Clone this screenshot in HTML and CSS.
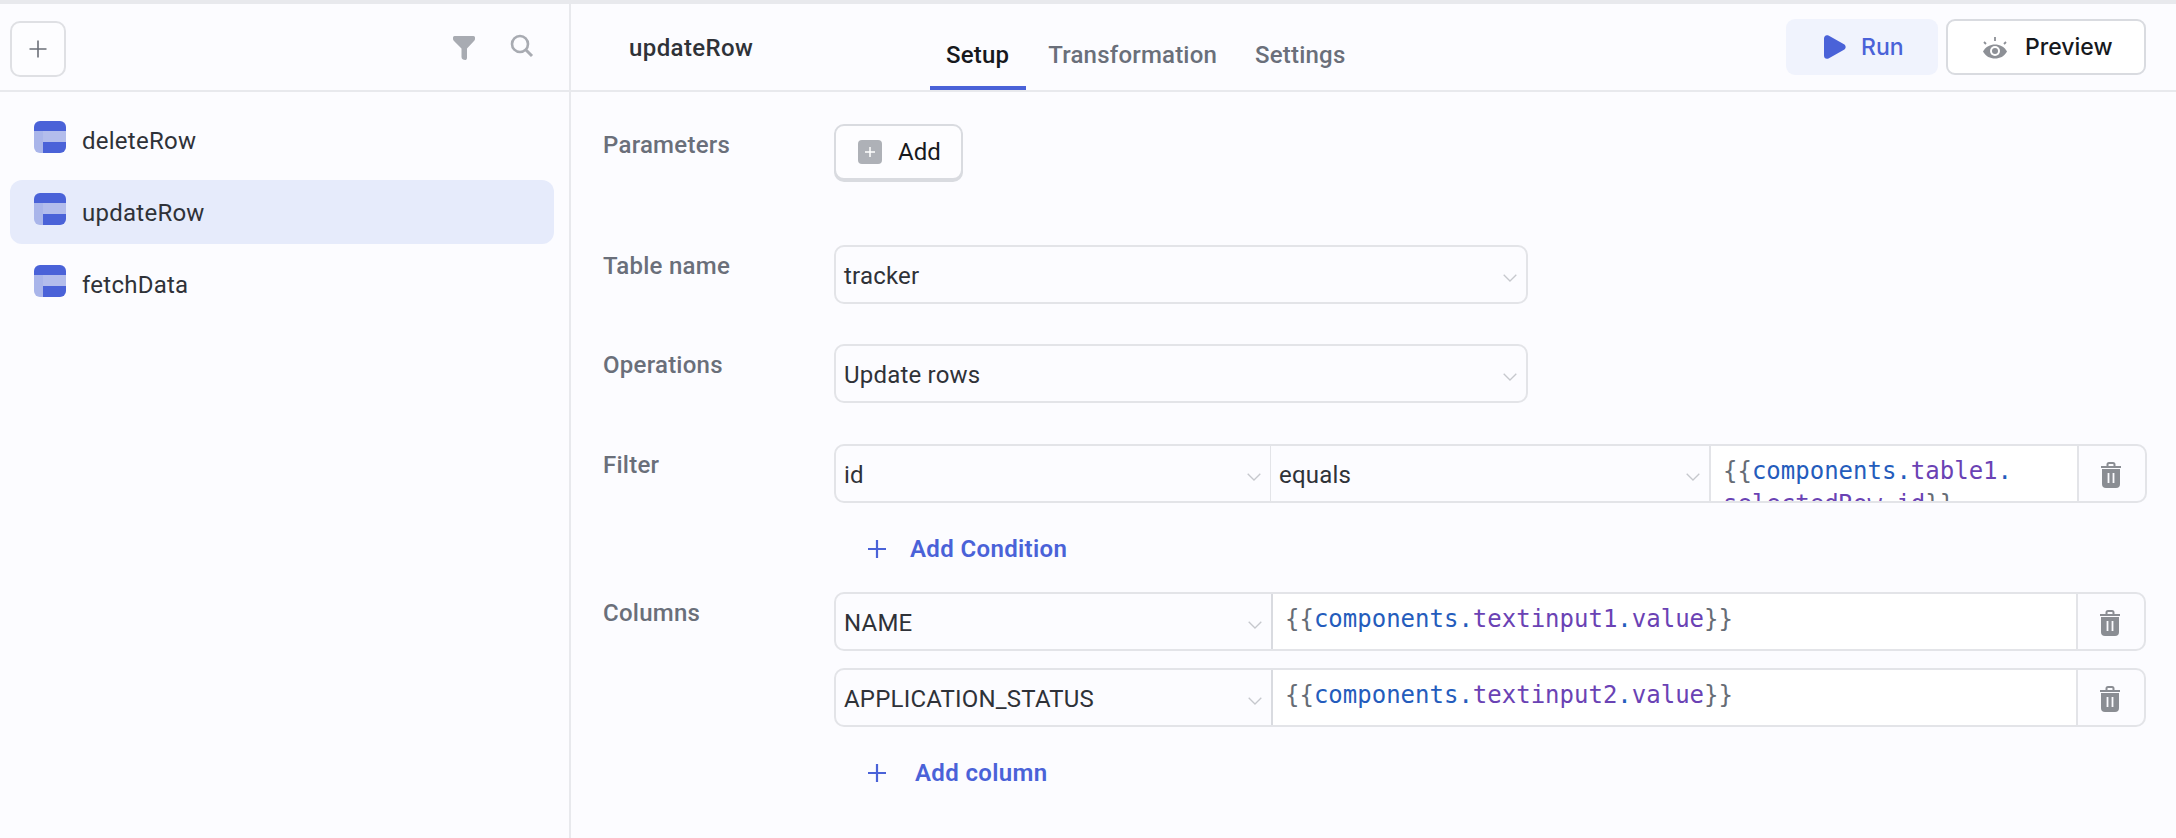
FILE: index.html
```html
<!DOCTYPE html>
<html lang="en">
<head>
<meta charset="utf-8">
<title>updateRow</title>
<link rel="stylesheet" href="styles.css">
</head>
<body>
<div class="app">
  <aside class="sidebar">
    <div class="side-head">
      <button class="new-btn" aria-label="New query">
        <svg width="20" height="20" viewBox="0 0 20 20"><path d="M10 1.5v17M1.5 10h17" stroke="#6b6f78" stroke-width="1.6" fill="none"/></svg>
      </button>
      <div class="side-tools">
        <svg class="funnel" width="22" height="24" viewBox="0 0 22 24"><path d="M1.500 0h19q1.500 0 1.500 1.500V3q0 1-1 2L14 12.500V22a2 2 0 0 1-1.300 1.900Q11 24 10 23.500 8.500 22.500 8.500 21v-8.500L1 5Q0 4 0 3V1.500Q0 0 1.500 0z" fill="#a8abb2"/></svg>
        <svg class="lens" width="24" height="24" viewBox="0 0 24 24"><circle cx="10" cy="10" r="8" fill="none" stroke="#a8abb2" stroke-width="2.6"/><path d="M16 16l6 6" stroke="#a8abb2" stroke-width="3" fill="none"/></svg>
      </div>
    </div>
    <ul class="query-list">
      <li class="query">
        <svg class="q-icon" width="32" height="32" viewBox="0 0 32 32"><use href="#tbl"/></svg>
        <span>deleteRow</span>
      </li>
      <li class="query active">
        <svg class="q-icon" width="32" height="32" viewBox="0 0 32 32"><use href="#tbl"/></svg>
        <span>updateRow</span>
      </li>
      <li class="query">
        <svg class="q-icon" width="32" height="32" viewBox="0 0 32 32"><use href="#tbl"/></svg>
        <span>fetchData</span>
      </li>
    </ul>
  </aside>
  <main class="editor">
    <header class="ed-head">
      <div class="ed-title">updateRow</div>
      <nav class="tabs">
        <a class="tab on">Setup</a>
        <a class="tab">Transformation</a>
        <a class="tab">Settings</a>
      </nav>
      <div class="actions">
        <button class="run">
          <svg width="22" height="24" viewBox="0 0 22 24"><path d="M0 3.5C0 .8 2.2-.6 4.5.6l15.5 8.6c2.200 1.200 2.200 4.400 0 5.600L4.500 23.400C2.200 24.600 0 23.200 0 20.500z" fill="#4a62d8"/></svg>
          Run
        </button>
        <button class="preview">
          <svg width="24" height="23" viewBox="0 0 24 23"><path d="M1 6L3 8M12 1v4M23 6L21 8" stroke="#8d9096" stroke-width="1.800" fill="none"/><path d="M0 15.500C3 10.500 7 8.500 12 8.500s9 2 12 7c-3 5-7 7-12 7s-9-2-12-7z" fill="#8d9096"/><circle cx="12" cy="15" r="5" fill="#fff"/><circle cx="12" cy="15" r="3" fill="#8d9096"/></svg>
          Preview
        </button>
      </div>
    </header>
    <form class="form">
      <div class="field f-params">
        <label class="lbl">Parameters</label>
        <button type="button" class="add-btn">
          <span class="add-ico"><svg width="12" height="12" viewBox="0 0 12 12"><path d="M6 1v10M1 6h10" stroke="#fff" stroke-width="1.500"/></svg></span>
          Add
        </button>
      </div>
      <div class="field">
        <label class="lbl">Table name</label>
        <div class="group narrow"><div class="sel grow">tracker<svg class="chev"><use href="#chev"/></svg></div></div>
      </div>
      <div class="field f-ops">
        <label class="lbl">Operations</label>
        <div class="group narrow"><div class="sel grow">Update rows<svg class="chev"><use href="#chev"/></svg></div></div>
      </div>
      <div class="field f-filter">
        <label class="lbl">Filter</label>
        <div class="stack">
          <div class="group">
            <div class="sel col-a">id<svg class="chev"><use href="#chev"/></svg></div>
            <div class="sel col-b">equals<svg class="chev"><use href="#chev"/></svg></div>
            <div class="code col-c"><i>{{</i><b>components.</b><u>table1</u><b>.</b><br><u>selectedRow</u><b>.</b><u>id</u><i>}}</i></div>
            <div class="del"><svg width="20" height="26"><use href="#trash"/></svg></div>
          </div>
          <a class="add-link link-cond"><svg width="20" height="20" viewBox="0 0 20 20"><path d="M10 1v18M1 10h18" stroke="#4a62d8" stroke-width="2.200"/></svg>Add Condition</a>
        </div>
      </div>
      <div class="field">
        <label class="lbl">Columns</label>
        <div class="stack">
          <div class="group">
            <div class="sel col-a2">NAME<svg class="chev"><use href="#chev"/></svg></div>
            <div class="code grow"><i>{{</i><b>components.</b><u>textinput1</u><b>.</b><u>value</u><i>}}</i></div>
            <div class="del"><svg width="20" height="26"><use href="#trash"/></svg></div>
          </div>
          <div class="group second">
            <div class="sel col-a2">APPLICATION_STATUS<svg class="chev"><use href="#chev"/></svg></div>
            <div class="code grow"><i>{{</i><b>components.</b><u>textinput2</u><b>.</b><u>value</u><i>}}</i></div>
            <div class="del"><svg width="20" height="26"><use href="#trash"/></svg></div>
          </div>
          <a class="add-link link-col"><svg width="20" height="20" viewBox="0 0 20 20"><path d="M10 1v18M1 10h18" stroke="#4a62d8" stroke-width="2.200"/></svg>Add column</a>
        </div>
      </div>
    </form>
  </main>
</div>
<svg class="defs" width="0" height="0">
  <symbol id="tbl" viewBox="0 0 32 32">
    <path d="M0 10V6a6 6 0 0 1 6-6h20a6 6 0 0 1 6 6v4z" fill="#4a62d8"/>
    <path d="M0 10h9v22H6a6 6 0 0 1-6-6z" fill="#a9b5ea"/>
    <path d="M9 10h23v11H9z" fill="#b3bdec"/>
    <path d="M9 21h23v5a6 6 0 0 1-6 6H9z" fill="#4a62d8"/>
  </symbol>
  <symbol id="chev" viewBox="0 0 14 8">
    <path d="M.7.7L7 7l6.300-6.300" fill="none" stroke="#c6c8cd" stroke-width="1.300"/>
  </symbol>
  <symbol id="trash" viewBox="0 0 20 26">
    <path d="M0 5h20" stroke="#8a8d93" stroke-width="2"/>
    <path d="M6.500 4V2.500Q6.500 1 8 1h4q1.500 0 1.500 1.500V4" fill="none" stroke="#8a8d93" stroke-width="2"/>
    <path d="M1 7h18v15a4 4 0 0 1-4 4H5a4 4 0 0 1-4-4z" fill="#8a8d93"/>
    <path d="M7.500 11v10M12.500 11v10" stroke="#fbfbfe" stroke-width="1.800"/>
  </symbol>
</svg>
</body>
</html>
```
FILE: styles.css
```css
* { box-sizing: border-box; }
html, body { margin: 0; height: 100%; }
body {
  background: #fcfcff;
  font-family: Roboto, "Liberation Sans", sans-serif;
  color: #2f3238;
  overflow: hidden;
}
.defs { position: absolute; }
.app {
  display: flex;
  height: 838px;
  border-top: 4px solid #e8e9ed;
}
.sidebar {
  width: 571px;
  flex: none;
  border-right: 2px solid #e8e9ed;
}
.side-head {
  height: 88px;
  border-bottom: 2px solid #e8e9ed;
  display: flex;
  align-items: flex-start;
  justify-content: space-between;
  padding: 17px 35px 0 10px;
}
.new-btn {
  width: 56px;
  height: 56px;
  border: 2px solid #dfe0e4;
  border-radius: 10px;
  background: #fdfdff;
  display: flex;
  align-items: center;
  justify-content: center;
  padding: 0;
}
.side-tools {
  display: flex;
  align-items: flex-start;
  gap: 35px;
  padding-top: 13px;
}
.funnel { margin-top: 2px; }
.query-list {
  list-style: none;
  margin: 0;
  padding: 16px 15px 0 10px;
  display: flex;
  flex-direction: column;
  gap: 8px;
}
.query {
  height: 64px;
  display: flex;
  align-items: center;
  gap: 16px;
  padding: 2px 0 0 24px;
  border-radius: 12px;
  font-size: 24px;
  letter-spacing: 0.25px;
}
.query.active { background: #e6ebfb; }
.q-icon { margin-bottom: 8px; flex: none; }
.editor { flex: 1; min-width: 0; }
.ed-head {
  height: 88px;
  border-bottom: 2px solid #e8e9ed;
  display: flex;
  position: relative;
  padding: 0 30px 0 58px;
}
.ed-title {
  width: 301px;
  font-size: 24px;
  font-weight: 500;
  letter-spacing: 0.4px;
  padding-top: 28px;
  line-height: 32px;
}
.tabs { display: flex; gap: 6px; }
.tab {
  height: 86px;
  padding: 35px 16px 0;
  line-height: 32px;
  font-size: 24px;
  font-weight: 500;
  letter-spacing: 0.2px;
  color: #6a6f7a;
}
.tab.on {
  color: #17191d;
  padding-right: 17px;
  border-bottom: 4px solid #4a62d8;
}
.actions {
  margin-left: auto;
  display: flex;
  gap: 8px;
  padding-top: 15px;
}
.actions button {
  height: 56px;
  border-radius: 9px;
  display: flex;
  align-items: center;
  font-family: Inter, sans-serif;
  font-size: 23px;
  font-weight: 500;
}
.run {
  width: 152px;
  border: 0;
  background: #f0f3fd;
  color: #4a62d8;
  gap: 15px;
  padding: 0 0 0 38px;
}
.preview {
  width: 200px;
  border: 2px solid #d9dbe0;
  background: #fff;
  color: #17191d;
  gap: 18px;
  padding: 0 0 0 35px;
}
.form {
  padding: 32px 30px 0 32px;
  display: flex;
  flex-direction: column;
  gap: 40px;
}
.field { display: flex; align-items: flex-start; }
.f-params { height: 81px; }
.f-ops { margin-bottom: 1px; }
.f-filter { margin-bottom: -17px; }
.lbl {
  width: 231px;
  flex: none;
  padding-top: 5px;
  line-height: 32px;
  font-size: 24px;
  font-weight: 500;
  color: #6a6f7a;
  letter-spacing: 0.25px;
}
.add-btn {
  width: 129px;
  height: 56px;
  border: 2px solid #d9dbe0;
  border-radius: 10px;
  background: #fdfdff;
  box-shadow: 0 2px 0 #d9dbe0;
  display: flex;
  align-items: center;
  gap: 16px;
  padding: 0 0 0 22px;
  font-family: Roboto, sans-serif;
  font-size: 24px;
  color: #17191d;
}
.add-ico {
  width: 24px;
  height: 24px;
  border-radius: 4px;
  background: #aeb1b7;
  display: flex;
  align-items: center;
  justify-content: center;
}
.stack { flex: 1; display: flex; flex-direction: column; }
.group {
  height: 59px;
  display: flex;
  border: 2px solid #e3e4e8;
  border-radius: 10px;
  overflow: hidden;
}
.group.second { margin-top: 17px; }
.group.narrow { width: 694px; flex: none; }
.sel {
  position: relative;
  display: flex;
  align-items: center;
  padding: 2px 0 0 8px;
  font-size: 24px;
  letter-spacing: 0.2px;
  line-height: 32px;
}
.grow { flex: 1; min-width: 0; }
.chev {
  position: absolute;
  right: 9px;
  top: 27px;
  width: 14px;
  height: 8px;
}
.col-a { width: 435px; flex: none; border-right: 1px solid #e3e4e8; }
.col-b { width: 440px; flex: none; border-right: 2px solid #e3e4e8; }
.col-c { width: 366px; flex: none; }
.col-a2 { width: 437px; flex: none; border-right: 2px solid #d9dbe0; }
.code {
  background: #fff;
  font-family: "DejaVu Sans Mono", monospace;
  font-size: 24px;
  line-height: 33px;
  padding: 9px 0 0 12px;
  overflow: hidden;
  white-space: nowrap;
}
.code i, .code b, .code u { font-style: normal; font-weight: 400; text-decoration: none; }
.code i { color: #666c75; }
.code b { color: #245cbc; }
.code u { color: #6a42b4; }
.del {
  width: 68px;
  flex: none;
  border-left: 2px solid #e3e4e8;
  display: flex;
  align-items: center;
  justify-content: center;
  padding: 2px 2px 0 0;
}
.add-link {
  display: flex;
  align-items: center;
  height: 40px;
  margin: 26px 0 0 33px;
  font-size: 24px;
  font-weight: 600;
  letter-spacing: 0.35px;
  color: #4a62d8;
}
.add-link svg { flex: none; }
.link-cond { gap: 23px; }
.link-col { gap: 28px; }
```
